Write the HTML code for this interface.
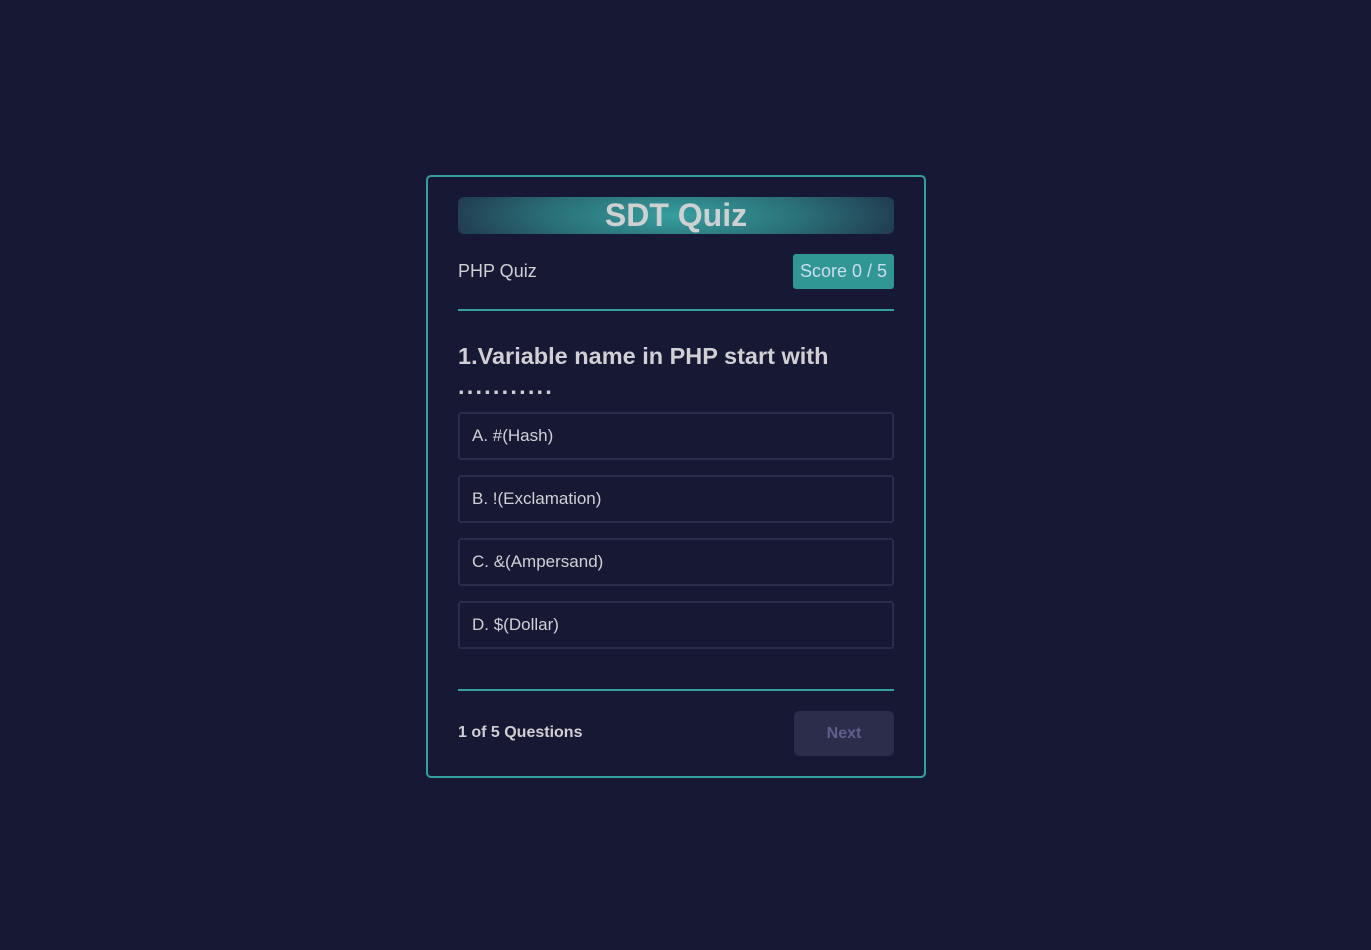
<!DOCTYPE html>
<html><head><style>
*{box-sizing:border-box;margin:0;padding:0}
body{width:1371px;height:950px;background:#171833;font-family:"Liberation Sans",Arial,sans-serif;color:#cfcfd4;position:relative;overflow:hidden}
.card{position:absolute;left:426px;top:175px;width:500px;height:603px;border:2px solid #35a0a0;border-radius:5px}
.abs{position:absolute}
.banner{left:30px;top:20px;width:436px;height:37px;border-radius:6px;background:radial-gradient(ellipse 60% 160% at 50% 50%,#35a0a0 0%,#2a6e76 50%,#1e2a44 100%);text-align:center;font-size:32px;font-weight:bold;line-height:37px;color:#d0d0d0}
.opt{left:30px;width:436px;height:48px;border:2px solid #2b2c4a;border-radius:3px;font-size:17px;line-height:44px;padding-left:12px;color:#d0d0d6}
.hr{left:30px;width:436px;height:2px;background:#35a0a0}
</style></head><body>
<div class="card">
<div class="abs banner">SDT Quiz</div>
<div class="abs" style="left:30px;top:84px;font-size:18px">PHP Quiz</div>
<div class="abs" style="left:365px;top:77px;width:101px;height:35px;background:#319795;border-radius:3px;font-size:18px;line-height:35px;text-align:center;color:#cde">Score 0 / 5</div>
<div class="abs hr" style="top:132px"></div>
<div class="abs" style="left:30px;top:164px;width:436px;font-size:23.5px;font-weight:bold;line-height:30px">1.Variable name in PHP start with<br><span style="letter-spacing:2.2px">...........</span></div>
<div class="abs opt" style="top:235px">A. #(Hash)</div>
<div class="abs opt" style="top:298px">B. !(Exclamation)</div>
<div class="abs opt" style="top:361px">C. &amp;(Ampersand)</div>
<div class="abs opt" style="top:424px">D. $(Dollar)</div>
<div class="abs hr" style="top:512px"></div>
<div class="abs" style="left:30px;top:547px;font-size:16px;font-weight:bold">1 of 5 Questions</div>
<div class="abs" style="left:366px;top:534px;width:100px;height:45px;background:#2c2d4a;border-radius:5px;text-align:center;line-height:45px;font-size:16px;font-weight:bold;color:#5e5f8c">Next</div>
</div>
</body></html>
